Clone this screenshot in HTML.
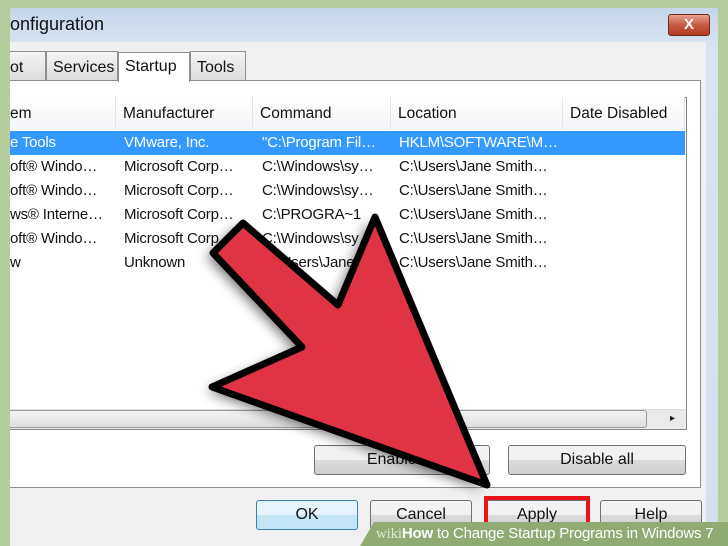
<!DOCTYPE html>
<html><head><style>
*{margin:0;padding:0;box-sizing:border-box}
body{width:728px;height:546px;overflow:hidden;background:#b5cc9c;position:relative;font-family:"Liberation Sans",sans-serif;color:#111}
.a{position:absolute}
.dlg{left:10px;top:8px;width:708px;height:538px;background:linear-gradient(#c6d6ea,#d8e4f1 40px,#d3dfee);}
.body{left:10px;top:42px;width:696px;height:504px;background:#f0f0f0}
.tab{height:30px;top:51px;border:1px solid #8e8f8f;border-bottom:none;background:linear-gradient(#f4f4f4,#dcdcdc);font-size:16px;padding:7px 6px 0}
.panel{left:10px;top:80px;width:691px;height:408px;background:#fff;border:1px solid #8e8f8f;border-left:none}
.list{left:10px;top:97px;width:677px;height:333px;border:1px solid #828790;border-left:none;background:#fff}
.hd{top:97px;height:33px;font-size:15.5px;padding:8px 0 0 7px;border-right:1px solid #e3e5e8;background:linear-gradient(#fff,#f3f4f6)}
.row{left:10px;width:675px;height:24px;font-size:15px;white-space:nowrap;letter-spacing:-0.2px}
.row span{position:absolute;top:3px}
.btn{height:30px;border:1px solid #707070;border-radius:3px;background:linear-gradient(#f2f2f2 50%,#dcdcdc 50%,#d0d0d0);font-size:16px;text-align:center;line-height:28px}
</style></head><body>
<div class="a dlg"></div>
<div class="a" style="left:10px;top:14px;font-size:18px">onfiguration</div>
<div class="a" style="left:668px;top:14px;width:42px;height:22px;border:1px solid #6d2a22;border-radius:3px;background:linear-gradient(#e8a08f,#c75a43 50%,#b63a22);color:#fff;font-weight:bold;text-align:center;font-size:15px;line-height:20px">X</div>
<div class="a body"></div>
<div class="a tab" style="left:10px;width:36px;border-left:none;padding-left:0">ot</div>
<div class="a tab" style="left:46px;width:72px">Services</div>
<div class="a tab" style="left:190px;width:56px">Tools</div>
<div class="a panel"></div>
<div class="a tab" style="left:118px;top:52px;width:72px;height:30px;background:#fff;padding-top:5px">Startup</div>
<div class="a list"></div>
<div class="a hd" style="left:10px;width:106px;padding-left:0">em</div>
<div class="a hd" style="left:116px;width:137px">Manufacturer</div>
<div class="a hd" style="left:253px;width:138px">Command</div>
<div class="a hd" style="left:391px;width:172px">Location</div>
<div class="a hd" style="left:563px;width:122px">Date Disabled</div>
<div class="a row" style="top:131px;background:#3399ff;color:#fff"><span style="left:0">e Tools</span><span style="left:114px">VMware, Inc.</span><span style="left:252px">"C:\Program Fil…</span><span style="left:389px">HKLM\SOFTWARE\M…</span></div>
<div class="a row" style="top:155px"><span style="left:0">oft® Windo…</span><span style="left:114px">Microsoft Corp…</span><span style="left:252px">C:\Windows\sy…</span><span style="left:389px">C:\Users\Jane Smith…</span></div>
<div class="a row" style="top:179px"><span style="left:0">oft® Windo…</span><span style="left:114px">Microsoft Corp…</span><span style="left:252px">C:\Windows\sy…</span><span style="left:389px">C:\Users\Jane Smith…</span></div>
<div class="a row" style="top:203px"><span style="left:0">ws® Interne…</span><span style="left:114px">Microsoft Corp…</span><span style="left:252px">C:\PROGRA~1</span><span style="left:389px">C:\Users\Jane Smith…</span></div>
<div class="a row" style="top:227px"><span style="left:0">oft® Windo…</span><span style="left:114px">Microsoft Corp…</span><span style="left:252px">C:\Windows\sy…</span><span style="left:389px">C:\Users\Jane Smith…</span></div>
<div class="a row" style="top:251px"><span style="left:0">w</span><span style="left:114px">Unknown</span><span style="left:252px">C:\Users\Jane…</span><span style="left:389px">C:\Users\Jane Smith…</span></div>
<div class="a" style="left:10px;top:409px;width:676px;height:20px;background:#eaeaea;border-top:1px solid #ddd"></div>
<div class="a" style="left:10px;top:410px;width:637px;height:18px;border:1px solid #9a9a9a;border-left:none;border-radius:0 3px 3px 0;background:linear-gradient(#f3f3f3,#dedede)"></div>
<div class="a" style="left:670px;top:413px;font-size:10px">▸</div>
<div class="a btn" style="left:314px;top:445px;width:176px">Enable all</div>
<div class="a btn" style="left:508px;top:445px;width:178px">Disable all</div>
<div class="a btn" style="left:256px;top:500px;width:102px;border-color:#3c7fb1;background:linear-gradient(#e5f4fc 50%,#c4e5f6 50%)">OK</div>
<div class="a btn" style="left:370px;top:500px;width:102px">Cancel</div>
<div class="a btn" style="left:486px;top:500px;width:102px">Apply</div>
<div class="a" style="left:484px;top:496px;width:106px;height:36px;border:4px solid #e8141a"></div>
<div class="a btn" style="left:600px;top:500px;width:102px">Help</div>
<svg class="a" style="left:0;top:0" width="728" height="546">
<defs><filter id="s" x="-20%" y="-20%" width="140%" height="140%"><feGaussianBlur stdDeviation="6"/></filter></defs>
<polygon points="243,223 338,305 375,217 487,485 212,387 302,347 213,253" fill="#000" opacity=".55" filter="url(#s)" transform="translate(-6,4)"/>
<polygon points="243,223 338,305 375,217 487,485 212,387 302,347 213,253" fill="#e03444" stroke="#000" stroke-width="7" stroke-linejoin="round"/>
</svg>
<div class="a" style="left:360px;top:522px;width:368px;height:24px;background:#8fab72;clip-path:polygon(14px 0,100% 0,100% 100%,0 100%)"></div>
<div class="a" style="left:376px;top:525px;font-size:15px;color:#fff;white-space:nowrap;font-weight:bold;letter-spacing:-0.2px"><span style="font-family:'Liberation Serif',serif;color:#dfe8d4;font-weight:normal">wiki</span>How <span style="font-weight:normal">to Change Startup Programs in Windows 7</span></div>
</body></html>
